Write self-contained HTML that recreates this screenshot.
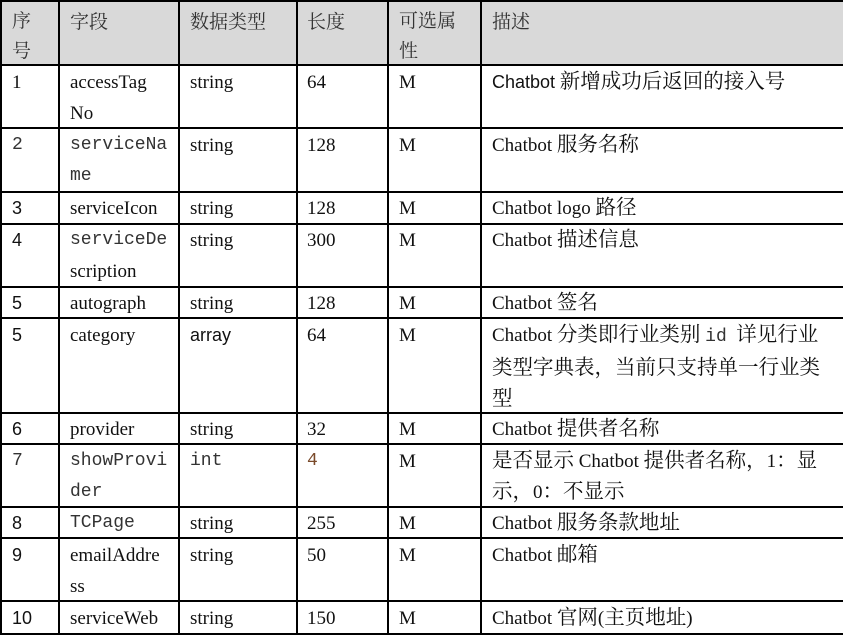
<!DOCTYPE html>
<html><head><meta charset="utf-8"><style>
body{margin:0;width:843px;height:635px;background:#fff;position:relative;overflow:hidden;font-family:"Liberation Serif","Noto Serif CJK SC",serif;font-size:19px;color:#111}
.h{position:absolute;left:0;width:843px;height:2px;background:#000}
.v{position:absolute;top:0;width:2px;height:635px;background:#000}
.t{position:absolute;line-height:31px;white-space:nowrap}
.m{font-family:"Liberation Mono","Noto Sans CJK SC",monospace;font-size:18px;color:#333}
.s{font-family:"Liberation Sans","Noto Sans CJK SC",sans-serif;font-size:18px}
i{font-style:normal;font-size:20.5px}
.hd{position:absolute;left:0;top:0;width:843px;height:65px;background:#d9d9d9}
.hdr{font-family:"Noto Serif CJK SC",serif;color:#333;font-size:19px}
</style></head><body>
<div class="hd"></div>
<div class="h" style="top:0"></div>
<div class="h" style="top:64px"></div>
<div class="h" style="top:127px"></div>
<div class="h" style="top:191px"></div>
<div class="h" style="top:223px"></div>
<div class="h" style="top:286px"></div>
<div class="h" style="top:317px"></div>
<div class="h" style="top:412px"></div>
<div class="h" style="top:443px"></div>
<div class="h" style="top:506px"></div>
<div class="h" style="top:537px"></div>
<div class="h" style="top:600px"></div>
<div class="h" style="top:633px"></div>
<div class="v" style="left:0"></div>
<div class="v" style="left:58px"></div>
<div class="v" style="left:178px"></div>
<div class="v" style="left:296px"></div>
<div class="v" style="left:387px"></div>
<div class="v" style="left:480px"></div>

<div class="t hdr" style="left:12px;top:5px;line-height:30px">序<br>号</div>
<div class="t hdr" style="left:70px;top:5px">字段</div>
<div class="t hdr" style="left:190px;top:5px">数据类型</div>
<div class="t hdr" style="left:307px;top:5px">长度</div>
<div class="t hdr" style="left:399px;top:5px;line-height:30px">可选属<br>性</div>
<div class="t hdr" style="left:492px;top:5px">描述</div>

<div class="t" style="left:12px;top:67px">1</div>
<div class="t" style="left:70px;top:67px">accessTag<br>No</div>
<div class="t" style="left:190px;top:67px">string</div>
<div class="t" style="left:307px;top:67px">64</div>
<div class="t" style="left:399px;top:67px">M</div>
<div class="t" style="left:492px;top:67px"><span class="s">Chatbot</span> <i>新增成功后返回的接入号</i></div>

<div class="t m" style="left:12px;top:130px">2</div>
<div class="t m" style="left:70px;top:130px">serviceNa<br>me</div>
<div class="t" style="left:190px;top:130px">string</div>
<div class="t" style="left:307px;top:130px">128</div>
<div class="t" style="left:399px;top:130px">M</div>
<div class="t" style="left:492px;top:130px">Chatbot <i>服务名称</i></div>

<div class="t s" style="left:12px;top:193px">3</div>
<div class="t" style="left:70px;top:193px">serviceIcon</div>
<div class="t" style="left:190px;top:193px">string</div>
<div class="t" style="left:307px;top:193px">128</div>
<div class="t" style="left:399px;top:193px">M</div>
<div class="t" style="left:492px;top:193px">Chatbot logo <i>路径</i></div>

<div class="t s" style="left:12px;top:225px">4</div>
<div class="t m" style="left:70px;top:225px">serviceDe</div>
<div class="t" style="left:70px;top:256px">scription</div>
<div class="t" style="left:190px;top:225px">string</div>
<div class="t" style="left:307px;top:225px">300</div>
<div class="t" style="left:399px;top:225px">M</div>
<div class="t" style="left:492px;top:225px">Chatbot <i>描述信息</i></div>

<div class="t s" style="left:12px;top:288px">5</div>
<div class="t" style="left:70px;top:288px">autograph</div>
<div class="t" style="left:190px;top:288px">string</div>
<div class="t" style="left:307px;top:288px">128</div>
<div class="t" style="left:399px;top:288px">M</div>
<div class="t" style="left:492px;top:288px">Chatbot <i>签名</i></div>

<div class="t s" style="left:12px;top:320px">5</div>
<div class="t" style="left:70px;top:320px">category</div>
<div class="t s" style="left:190px;top:320px">array</div>
<div class="t" style="left:307px;top:320px">64</div>
<div class="t" style="left:399px;top:320px">M</div>
<div class="t" style="left:492px;top:320px">Chatbot <i>分类即行业类别</i> <span class="m">id</span> &nbsp;<i>详见行业</i><br><i>类型字典表，当前只支持单一行业类</i><br><i>型</i></div>

<div class="t s" style="left:12px;top:414px">6</div>
<div class="t" style="left:70px;top:414px">provider</div>
<div class="t" style="left:190px;top:414px">string</div>
<div class="t" style="left:307px;top:414px">32</div>
<div class="t" style="left:399px;top:414px">M</div>
<div class="t" style="left:492px;top:414px">Chatbot <i>提供者名称</i></div>

<div class="t m" style="left:12px;top:446px">7</div>
<div class="t m" style="left:70px;top:446px">showProvi<br>der</div>
<div class="t m" style="left:190px;top:446px">int</div>
<div class="t m" style="left:307px;top:446px;color:#7a4a2a">4</div>
<div class="t" style="left:399px;top:446px">M</div>
<div class="t" style="left:492px;top:446px"><i>是否显示</i> Chatbot <i>提供者名称，</i>1<i>：显</i><br><i>示，</i>0<i>：不显示</i></div>

<div class="t s" style="left:12px;top:508px">8</div>
<div class="t m" style="left:70px;top:508px">TCPage</div>
<div class="t" style="left:190px;top:508px">string</div>
<div class="t" style="left:307px;top:508px">255</div>
<div class="t" style="left:399px;top:508px">M</div>
<div class="t" style="left:492px;top:508px">Chatbot <i>服务条款地址</i></div>

<div class="t s" style="left:12px;top:540px">9</div>
<div class="t" style="left:70px;top:540px">emailAddre<br>ss</div>
<div class="t" style="left:190px;top:540px">string</div>
<div class="t" style="left:307px;top:540px">50</div>
<div class="t" style="left:399px;top:540px">M</div>
<div class="t" style="left:492px;top:540px">Chatbot <i>邮箱</i></div>

<div class="t s" style="left:12px;top:603px">10</div>
<div class="t" style="left:70px;top:603px">serviceWeb</div>
<div class="t" style="left:190px;top:603px">string</div>
<div class="t" style="left:307px;top:603px">150</div>
<div class="t" style="left:399px;top:603px">M</div>
<div class="t" style="left:492px;top:603px">Chatbot <i>官网</i>(<i>主页地址</i>)</div>
</body></html>
